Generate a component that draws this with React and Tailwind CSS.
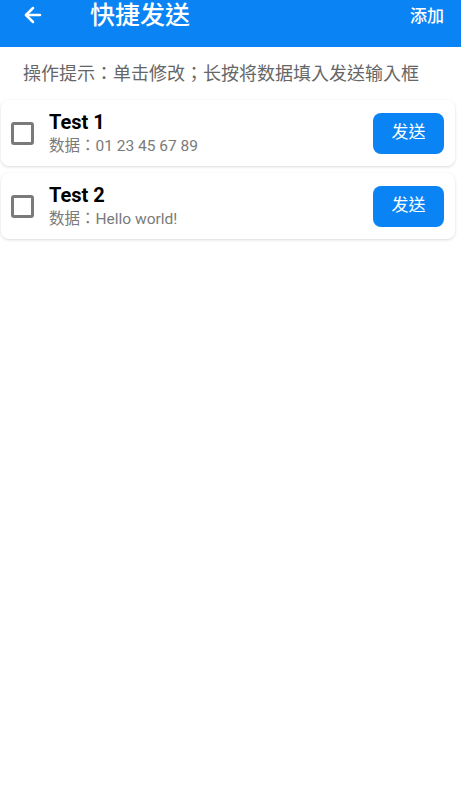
import { ArrowLeft } from "lucide-react";

const items = [
  { title: "Test 1", data: "01 23 45 67 89" },
  { title: "Test 2", data: "Hello world!" },
];

const font = { fontFamily: "Roboto, 'Noto Sans CJK TC', sans-serif" };

const QuickItem = ({ title, data }) => (
  <div className="flex h-[66px] items-center rounded-lg bg-white pl-[10px] pr-[11px] shadow-[0_1px_3px_rgba(0,0,0,0.15)]">
    <div className="h-[23px] w-[23px] rounded-[3px] border-[3px] border-[#7a7a7a]" />
    <div className="ml-[15px] flex flex-1 flex-col">
      <span className="text-[20px] font-bold leading-[23px] text-black">{title}</span>
      <span className="mt-[3px] text-[15.5px] leading-[18px] text-[#7a7a7a]">数据：{data}</span>
    </div>
    <button className="h-[41px] w-[71px] rounded-lg bg-[#0a84f5] text-[17px] text-white">发送</button>
  </div>
);

export default function App() {
  return (
    <div className="min-h-screen bg-white" style={font}>
      <header className="flex h-[47px] items-start bg-[#0a84f5] pt-[2px] text-white">
        <ArrowLeft className="ml-[21px] mt-[1px] h-[24px] w-[24px]" strokeWidth={2.5} />
        <h1 className="ml-[45px] flex-1 text-[25px] font-medium leading-[28px]">快捷发送</h1>
        <span className="mr-[17px] mt-[3px] text-[17px] font-medium leading-[22px]">添加</span>
      </header>
      <p className="px-[23px] pt-[15px] pb-[14px] text-[18px] leading-[24px] text-[#666666]">
        操作提示：单击修改；长按将数据填入发送输入框
      </p>
      <div className="flex flex-col gap-[7px] pl-[1px] pr-[6px]">
        {items.map((item) => (
          <QuickItem key={item.title} {...item} />
        ))}
      </div>
    </div>
  );
}
